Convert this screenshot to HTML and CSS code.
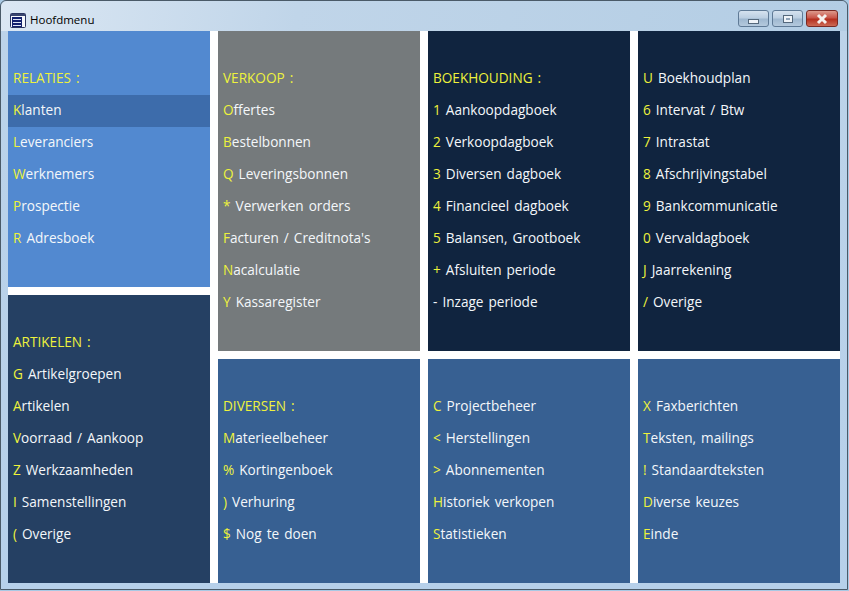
FILE: index.html
```html
<!DOCTYPE html>
<html>

<head>
  <meta charset="UTF-8">
  <title>Hoofdmenu</title>
  <link rel="stylesheet" href="styles.css">
</head>

<body>
  <div class="window">
    <div class="titlebar">
      <svg class="appicon" width="16" height="15" viewBox="0 0 16 15">
        <rect x="0.5" y="0.5" width="15" height="14" rx="1" fill="#f6f8fc" stroke="#2a3560" />
        <rect x="1" y="1" width="14" height="2" fill="#39456f" />
        <rect x="2" y="4" width="10" height="10" fill="#12206e" />
        <path d="M3 6.5h8M3 9.5h8M3 12.5h8" stroke="#dfe5f5" stroke-width="1" />
      </svg>
      <span class="title">Hoofdmenu</span>
      <div class="controls">
        <div class="ctl">
          <span class="min-glyph"></span>
        </div>
        <div class="ctl">
          <span class="max-glyph"></span>
        </div>
        <div class="ctl close">
          <svg width="14" height="12" viewBox="0 0 14 12">
            <path d="M3 2l8 8M11 2l-8 8" stroke="#f6f1ee" stroke-width="3" />
          </svg>
        </div>
      </div>
    </div>

    <div class="client">
      <div class="col">
        <div class="tile h8 lightblue">
          <p class="head">RELATIES :</p>
          <p class="item active"><b>K</b>lanten</p>
          <p class="item"><b>L</b>everanciers</p>
          <p class="item"><b>W</b>erknemers</p>
          <p class="item"><b>P</b>rospectie</p>
          <p class="item"><b>R</b> Adresboek</p>
        </div>
        <div class="tile h9 slate">
          <p class="head">ARTIKELEN :</p>
          <p class="item"><b>G</b> Artikelgroepen</p>
          <p class="item"><b>A</b>rtikelen</p>
          <p class="item"><b>V</b>oorraad / Aankoop</p>
          <p class="item"><b>Z</b> Werkzaamheden</p>
          <p class="item"><b>I</b> Samenstellingen</p>
          <p class="item"><b>(</b> Overige</p>
        </div>
      </div>

      <div class="col">
        <div class="tile h10 grey">
          <p class="head">VERKOOP :</p>
          <p class="item"><b>O</b>ffertes</p>
          <p class="item"><b>B</b>estelbonnen</p>
          <p class="item"><b>Q</b> Leveringsbonnen</p>
          <p class="item"><b>*</b> Verwerken orders</p>
          <p class="item"><b>F</b>acturen / Creditnota's</p>
          <p class="item"><b>N</b>acalculatie</p>
          <p class="item"><b>Y</b> Kassaregister</p>
        </div>
        <div class="tile h7 blue">
          <p class="head">DIVERSEN :</p>
          <p class="item"><b>M</b>aterieelbeheer</p>
          <p class="item"><b>%</b> Kortingenboek</p>
          <p class="item"><b>)</b> Verhuring</p>
          <p class="item"><b>$</b> Nog te doen</p>
        </div>
      </div>

      <div class="col">
        <div class="tile h10 navy">
          <p class="head">BOEKHOUDING :</p>
          <p class="item"><b>1</b> Aankoopdagboek</p>
          <p class="item"><b>2</b> Verkoopdagboek</p>
          <p class="item"><b>3</b> Diversen dagboek</p>
          <p class="item"><b>4</b> Financieel dagboek</p>
          <p class="item"><b>5</b> Balansen, Grootboek</p>
          <p class="item"><b>+</b> Afsluiten periode</p>
          <p class="item">- Inzage periode</p>
        </div>
        <div class="tile h7 blue">
          <p class="item"><b>C</b> Projectbeheer</p>
          <p class="item"><b>&lt;</b> Herstellingen</p>
          <p class="item"><b>&gt;</b> Abonnementen</p>
          <p class="item"><b>H</b>istoriek verkopen</p>
          <p class="item"><b>S</b>tatistieken</p>
        </div>
      </div>

      <div class="col">
        <div class="tile h10 navy">
          <p class="item"><b>U</b> Boekhoudplan</p>
          <p class="item"><b>6</b> Intervat / Btw</p>
          <p class="item"><b>7</b> Intrastat</p>
          <p class="item"><b>8</b> Afschrijvingstabel</p>
          <p class="item"><b>9</b> Bankcommunicatie</p>
          <p class="item"><b>0</b> Vervaldagboek</p>
          <p class="item"><b>J</b> Jaarrekening</p>
          <p class="item"><b>/</b> Overige</p>
        </div>
        <div class="tile h7 blue">
          <p class="item"><b>X</b> Faxberichten</p>
          <p class="item"><b>T</b>eksten, mailings</p>
          <p class="item"><b>!</b> Standaardteksten</p>
          <p class="item"><b>D</b>iverse keuzes</p>
          <p class="item"><b>E</b>inde</p>
        </div>
      </div>
    </div>
  </div>
</body>

</html>
```

FILE: styles.css
```css
html,
body {
  margin: 0;
  padding: 0;
  background: #a9c9e4;
}

body {
  width: 849px;
  height: 591px;
  overflow: hidden;
  font-family: "Open Sans", "Noto Sans", sans-serif;
}

.window {
  width: 848px;
  height: 590px;
  box-sizing: border-box;
  border: 1px solid #4a5a68;
  border-radius: 6px 6px 0 0;
  background: linear-gradient(#b3cbe3 0, #bcd3e9 30px, #b6d0ea 100%);
  padding: 0 7px 6px 7px;
}

.titlebar {
  height: 30px;
  display: flex;
  align-items: center;
  background: linear-gradient(100deg, #dbe7f3 0, #c0d5e9 35%, #b3cde4 100%);
  margin: 0 -7px;
  padding: 0 7px 0 3px;
  border-radius: 6px 6px 0 0;
}

.appicon {
  margin-left: 6px;
  margin-top: 8px;
}

.title {
  margin-left: 4px;
  margin-top: 6px;
  font-family: "Open Sans", sans-serif;
  font-size: 11.5px;
  color: #000;
}

.controls {
  margin-left: auto;
  display: flex;
  gap: 3px;
  align-self: flex-start;
  margin-top: 9px;
  margin-right: 2px;
}

.ctl {
  width: 31px;
  height: 17px;
  box-sizing: border-box;
  border: 1px solid #5f7a96;
  border-radius: 3px;
  background: linear-gradient(#d5e2ef 0, #bccfe2 45%, #9fb8d0 55%, #b4c9dd 100%);
  display: flex;
  align-items: center;
  justify-content: center;
}

.close {
  width: 32px;
  border-color: #7a2a24;
  background: linear-gradient(#dd9a8c 0, #c9564a 45%, #b5301f 55%, #cd6a55 100%);
}

.min-glyph {
  width: 9px;
  height: 3px;
  margin-top: 5px;
  background: #eef3f8;
  border: 1px solid #54687c;
}

.max-glyph {
  width: 4px;
  height: 2px;
  background: #8fa3b8;
  border: 2px solid #eef3f8;
  outline: 1px solid #54687c;
}

.client {
  display: flex;
  gap: 8px;
  width: 832px;
  background: #fff;
}

.col {
  width: 202px;
  display: flex;
  flex-direction: column;
  gap: 8px;
}

.tile {
  box-sizing: border-box;
  padding-top: 32px;
}

.h7 {
  height: 224px;
}

.h8 {
  height: 256px;
}

.h9 {
  height: 288px;
}

.h10 {
  height: 320px;
}

.lightblue {
  background: #5289d0;
}

.slate {
  background: #254063;
}

.grey {
  background: #757a7c;
}

.navy {
  background: #10243f;
}

.blue {
  background: #376092;
}

.head,
.item {
  margin: 0;
  height: 32px;
  line-height: 30px;
  padding-left: 5px;
  font-size: 13.6px;
  word-spacing: 1.5px;
  white-space: nowrap;
}

.head {
  color: #eef23c;
}

.item {
  color: #f4f7fa;
}

.item b {
  font-weight: normal;
  color: #eef23c;
}

.active {
  background: #3d6cab;
}
```
